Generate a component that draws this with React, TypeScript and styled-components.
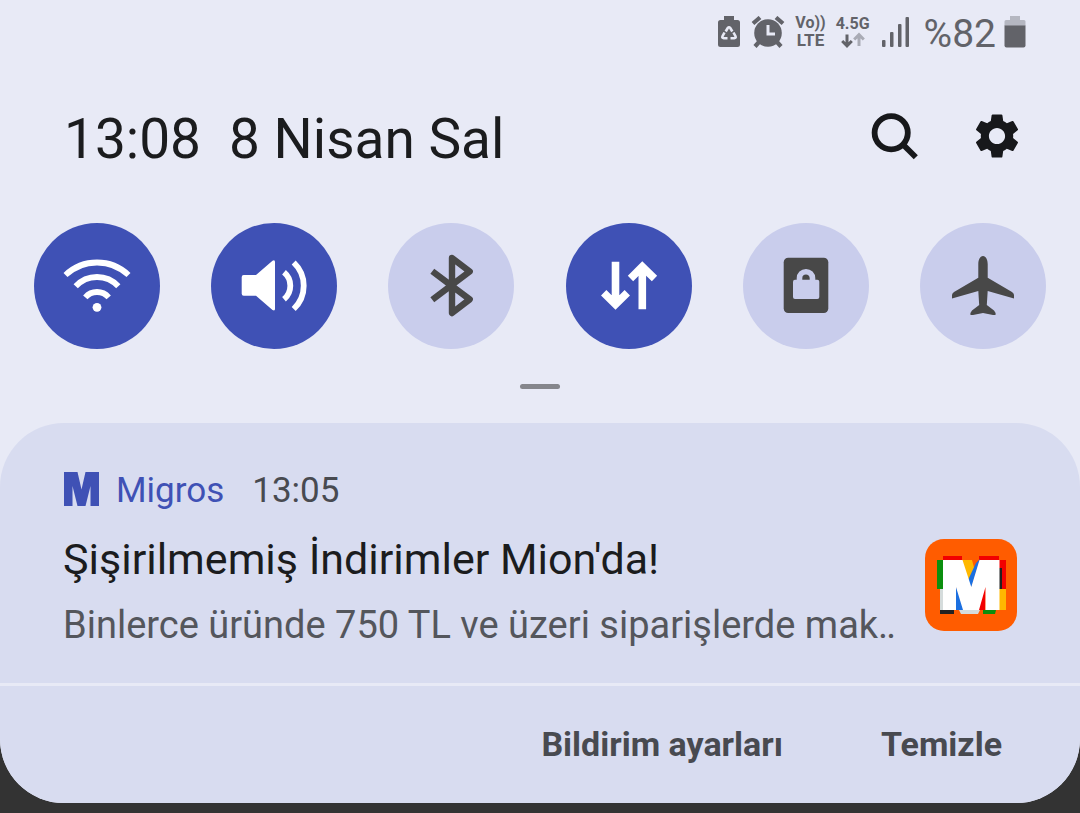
import React from "react";
import styled, { createGlobalStyle } from "styled-components";
import { MdSettings } from "react-icons/md";

const GlobalStyle = createGlobalStyle`
  *, *::before, *::after { box-sizing: border-box; }
  html, body { margin: 0; background: #333333; }
  body { font-family: Roboto, "Liberation Sans", sans-serif; color: #1b1c1e; }
  button { margin: 0; padding: 0; border: 0; background: none; font: inherit; color: inherit; cursor: pointer; }
  svg { display: block; flex: none; }
`;

const Shade = styled.main`
  background: #e8eaf6;
  border-radius: 0 0 64px 64px;
  margin-bottom: 10px;
`;

const StatusBar = styled.div`
  display: flex;
  justify-content: flex-end;
  align-items: center;
  height: 64px;
  padding: 0 54px;
  color: #626369;
`;

const StatusGroup = styled.div`
  display: flex;
  align-items: center;
  gap: 10px;
  margin-right: 14px;
`;

const NetworkLabel = styled.div`
  display: flex;
  flex-direction: column;
  align-items: center;
  font-size: 16px;
  line-height: 17px;
  font-weight: 700;
`;

const LteLine = styled.span`
  font-size: 17px;
  line-height: 19px;
`;

const BatteryText = styled.span`
  padding-top: 4px;
  font-size: 39px;
  line-height: 48px;
  font-weight: 400;
  margin-right: 8px;
`;

const Header = styled.header`
  display: flex;
  align-items: center;
  justify-content: space-between;
  height: 144px;
  padding: 0 56px 0 64px;
`;

const Clock = styled.h1`
  display: flex;
  gap: 28px;
  margin: 0;
  padding-top: 6px;
  font-size: 55px;
  line-height: 64px;
  font-weight: 400;
`;

const HeaderActions = styled.div`
  display: flex;
  gap: 48px;
`;

const IconButton = styled.button`
  display: grid;
  place-items: center;
  width: 54px;
  height: 54px;
  color: #17181b;
`;

const Tiles = styled.div`
  display: flex;
  justify-content: space-between;
  padding: 15px 34px 0;
`;

const Tile = styled.button<{ $on?: boolean }>`
  width: 126px;
  height: 126px;
  border-radius: 50%;
  background: ${(p) => (p.$on ? "#3f51b5" : "#c9cdec")};
  color: ${(p) => (p.$on ? "#ffffff" : "#484848")};
`;

const Handle = styled.div`
  width: 40px;
  height: 5px;
  margin: 35px auto 34px;
  border-radius: 3px;
  background: #85868c;
`;

const Card = styled.article`
  border-radius: 64px;
  background: #d8dcf0;
`;

const CardBody = styled.div`
  display: flex;
  align-items: flex-end;
  justify-content: space-between;
  gap: 32px;
  height: 260px;
  padding: 0 63px 34px;
`;

const CardText = styled.div`
  min-width: 0;
`;

const AppLine = styled.div`
  display: flex;
  align-items: center;
  font-size: 35px;
  line-height: 44px;
  color: #484a50;
`;

const AppName = styled.span`
  margin: 0 28px 0 17px;
  color: #3f51b5;
`;

const Title = styled.h2`
  margin: 18px 0 0;
  font-size: 43px;
  line-height: 56px;
  font-weight: 400;
  white-space: nowrap;
`;

const Message = styled.p`
  margin: 14px 0 0;
  font-size: 38px;
  line-height: 48px;
  color: #54565c;
  white-space: nowrap;
`;

const AppIcon = styled.svg`
  margin-bottom: 18px;
`;

const Footer = styled.footer`
  display: flex;
  justify-content: flex-end;
  gap: 98px;
  height: 120px;
  padding: 0 78px 2px;
  border-top: 3px solid #e8eaf6;
`;

const FooterButton = styled.button`
  && {
    font-size: 34px;
    font-weight: 700;
    color: #484a50;
  }
`;

const PowerSavingIcon = () => (
  <svg width="24" height="32" viewBox="0 0 24 32" aria-hidden="true">
    <path d="M7 0h10v4h3.500a2.500 2.500 0 0 1 2.500 2.500v22a2.500 2.500 0 0 1-2.500 2.500h-17A2.500 2.500 0 0 1 1 28.500v-22A2.500 2.500 0 0 1 3.500 4H7z" fill="currentColor" />
    <g fill="none" stroke="#e8eaf6" strokeWidth="2.600">
      <path d="M8.700 15.500l2-3.500q1.300-1.500 2.600 0l2 3.500" />
      <path d="M7.500 16.500l-2 3.700q-.8 2 1.200 2h3.800" />
      <path d="M16.500 16.500l2 3.700q.8 2-1.200 2h-3.800" />
    </g>
  </svg>
);

const AlarmIcon = () => (
  <svg width="34" height="32" viewBox="0 0 34 32" aria-hidden="true">
    <circle cx="17" cy="17" r="13.800" fill="currentColor" />
    <g fill="none" stroke="currentColor" strokeWidth="4.200">
      <path d="M2 7.500l7-6M32 7.500l-7-6M8 26l-4 4.500M26 26l4 4.500" />
    </g>
    <path d="M17 9v9h7" fill="none" stroke="#e8eaf6" strokeWidth="3" />
  </svg>
);

const DataArrowsIcon = () => (
  <svg width="24" height="17" viewBox="0 0 24 17" fill="none" strokeWidth="3" aria-hidden="true">
    <path d="M6 2.500v11M1.200 9L6 13.800 10.800 9" stroke="currentColor" />
    <path d="M18 14V3M13.200 7.500L18 2.700l4.800 4.800" stroke="#a9abb5" />
  </svg>
);

const SignalIcon = () => (
  <svg width="30" height="32" viewBox="-2 0 30 32" fill="currentColor" aria-hidden="true">
    <rect x="0" y="24" width="3.500" height="7" rx="1" />
    <rect x="8" y="16" width="3.500" height="15" rx="1" />
    <rect x="16" y="8" width="3.500" height="23" rx="1" />
    <rect x="23.500" y="1" width="3.500" height="30" rx="1" />
  </svg>
);

const BatteryIcon = () => (
  <svg width="22" height="32" viewBox="0 0 22 32" aria-hidden="true">
    <path d="M6 0h10v4h4a1.500 1.500 0 0 1 1.500 1.500V10H.5V5.500A1.500 1.500 0 0 1 2 4h4z" fill="#b5b7c1" />
    <path d="M.5 9.500h21v20a2 2 0 0 1-2 2h-17a2 2 0 0 1-2-2z" fill="currentColor" />
  </svg>
);

const SearchIcon = () => (
  <svg width="48" height="48" viewBox="0 0 48 48" fill="none" stroke="currentColor" strokeWidth="5.800" aria-hidden="true">
    <circle cx="20.200" cy="20.700" r="16.600" />
    <path d="M32 32.500L44.800 45.300" />
  </svg>
);

const TileSvg = ({ children }: { children: React.ReactNode }) => (
  <svg width="126" height="126" viewBox="0 0 126 126" fill="none" aria-hidden="true">
    {children}
  </svg>
);

const WifiGlyph = () => (
  <TileSvg>
    <g stroke="currentColor" strokeWidth="5.800">
      <path d="M31.500 52A45.900 45.900 0 0 1 94.500 52" />
      <path d="M41.700 63.300A29 29 0 0 1 84.300 63.300" />
      <path d="M51.300 74.300A15.600 15.600 0 0 1 74.700 74.300" />
    </g>
    <circle cx="63" cy="84.300" r="4.400" fill="currentColor" />
  </TileSvg>
);

const SoundGlyph = () => (
  <TileSvg>
    <path d="M32.700 52H45L61.500 37.800Q64 36.500 64 39V86Q64 88.300 61.500 87L45 72.700H32.700a2 2 0 0 1-2-2V54a2 2 0 0 1 2-2z" fill="currentColor" />
    <g stroke="currentColor" strokeWidth="5.800">
      <path d="M73 49.200A17.600 17.600 0 0 1 73 76.200" />
      <path d="M82.700 39.500A32 32 0 0 1 82.700 86" />
    </g>
  </TileSvg>
);

const BluetoothGlyph = () => (
  <TileSvg>
    <path d="M44.300 48.200L81.700 76.400 64 90V35L81.700 48.500 44.300 76.800" stroke="currentColor" strokeWidth="6.400" strokeLinejoin="round" />
  </TileSvg>
);

const DataGlyph = () => (
  <TileSvg>
    <g stroke="currentColor" strokeWidth="7.600">
      <path d="M49.500 38.700V82M37.700 69.700L49.500 81.500 61.300 69.700" />
      <path d="M76.300 86.300V43M64.500 55.500L76.300 43.700 88.500 55.500" />
    </g>
  </TileSvg>
);

const LockGlyph = () => (
  <TileSvg>
    <rect x="40.700" y="34.700" width="44.600" height="55.300" rx="4.500" fill="currentColor" />
    <rect x="50" y="56.700" width="26.300" height="19.300" rx="2" fill="#c9cdec" />
    <path d="M56.500 58V55.200a6.500 6.500 0 0 1 13 0V58" stroke="#c9cdec" strokeWidth="5.600" />
  </TileSvg>
);

const PlaneGlyph = () => (
  <TileSvg>
    <path
      d="M63 33C60 33 58.300 37 58.300 41V54.700L34 69Q32 70.300 32 72V75.500L58.300 68 59.200 82 52 87.500Q50 89.500 50.500 92L53 92 63 90 73 92 75.500 92Q76 89.500 74 87.500L66.800 82 67.700 68 94 75.500V72Q94 70.300 92 69L67.700 54.700V41C67.700 37 66 33 63 33z"
      fill="currentColor"
    />
  </TileSvg>
);

const BrandMark = () => (
  <svg width="36" height="38" viewBox="0 0 36 38" fill="#3f51b5" aria-hidden="true">
    <path d="M1 0H14.500L18.500 17.500 22.500 0H36V34H27.500V14L22.500 34H14.500L9.500 14V34H1z" />
  </svg>
);

const BrandIcon = () => (
  <AppIcon width="92" height="92" viewBox="0 0 92 92" role="img" aria-label="Migros">
    <rect width="92" height="92" rx="19" fill="#ff5c00" />
    <path d="M12 21h7v29h-7z" fill="#0b8f0e" />
    <path d="M18 17h19v5H18zM54 17h20v5H54z" fill="#f20000" />
    <path d="M73 21h8v29h-8z" fill="#f20000" />
    <path d="M73 29h4v21h-4z" fill="#222222" />
    <path d="M73 50h8v21h-8z" fill="#ffb800" />
    <path d="M15 50h5v21h-5zM34 71h21l-2 4H36z" fill="#d5dcdc" />
    <path d="M15 71h14v4H15z" fill="#222222" />
    <path d="M58 71h13l-1 4H58z" fill="#0b8f0e" />
    <path d="M37 21h10l3 11-6 12z" fill="#ffb800" />
    <path d="M55 20l-4 4-8 17 3 9z" fill="#1b6fe0" />
    <path d="M30 44l9 27h-8z" fill="#1b6fe0" />
    <path d="M61 44l-9 27h8z" fill="#f20000" />
    <path d="M18 21H37.500L46.300 48 54.500 21H74.500V71H60.500V48L54 71H38L31 48V71H18z" fill="#ffffff" />
  </AppIcon>
);

export default function App() {
  return (
    <>
      <GlobalStyle />
      <Shade>
        <StatusBar>
          <StatusGroup>
            <PowerSavingIcon />
            <AlarmIcon />
            <NetworkLabel>
              <span>Vo))</span>
              <LteLine>LTE</LteLine>
            </NetworkLabel>
            <NetworkLabel>
              <span>4.5G</span>
              <DataArrowsIcon />
            </NetworkLabel>
            <SignalIcon />
          </StatusGroup>
          <BatteryText>%82</BatteryText>
          <BatteryIcon />
        </StatusBar>
        <Header>
          <Clock>
            <span>13:08</span>
            <span>8 Nisan Sal</span>
          </Clock>
          <HeaderActions>
            <IconButton aria-label="Ara"><SearchIcon /></IconButton>
            <IconButton aria-label="Ayarlar"><MdSettings size={54} /></IconButton>
          </HeaderActions>
        </Header>
        <Tiles>
          <Tile $on aria-pressed="true" aria-label="Wi-Fi"><WifiGlyph /></Tile>
          <Tile $on aria-pressed="true" aria-label="Ses"><SoundGlyph /></Tile>
          <Tile aria-pressed="false" aria-label="Bluetooth"><BluetoothGlyph /></Tile>
          <Tile $on aria-pressed="true" aria-label="Mobil veri"><DataGlyph /></Tile>
          <Tile aria-pressed="false" aria-label="Ekran kilidi"><LockGlyph /></Tile>
          <Tile aria-pressed="false" aria-label="Uçak modu"><PlaneGlyph /></Tile>
        </Tiles>
        <Handle />
        <Card>
          <CardBody>
            <CardText>
              <AppLine>
                <BrandMark />
                <AppName>Migros</AppName>
                <span>13:05</span>
              </AppLine>
              <Title>Şişirilmemiş İndirimler Mion'da!</Title>
              <Message>Binlerce üründe 750 TL ve üzeri siparişlerde mak‥</Message>
            </CardText>
            <BrandIcon />
          </CardBody>
          <Footer>
            <FooterButton>Bildirim ayarları</FooterButton>
            <FooterButton>Temizle</FooterButton>
          </Footer>
        </Card>
      </Shade>
    </>
  );
}
